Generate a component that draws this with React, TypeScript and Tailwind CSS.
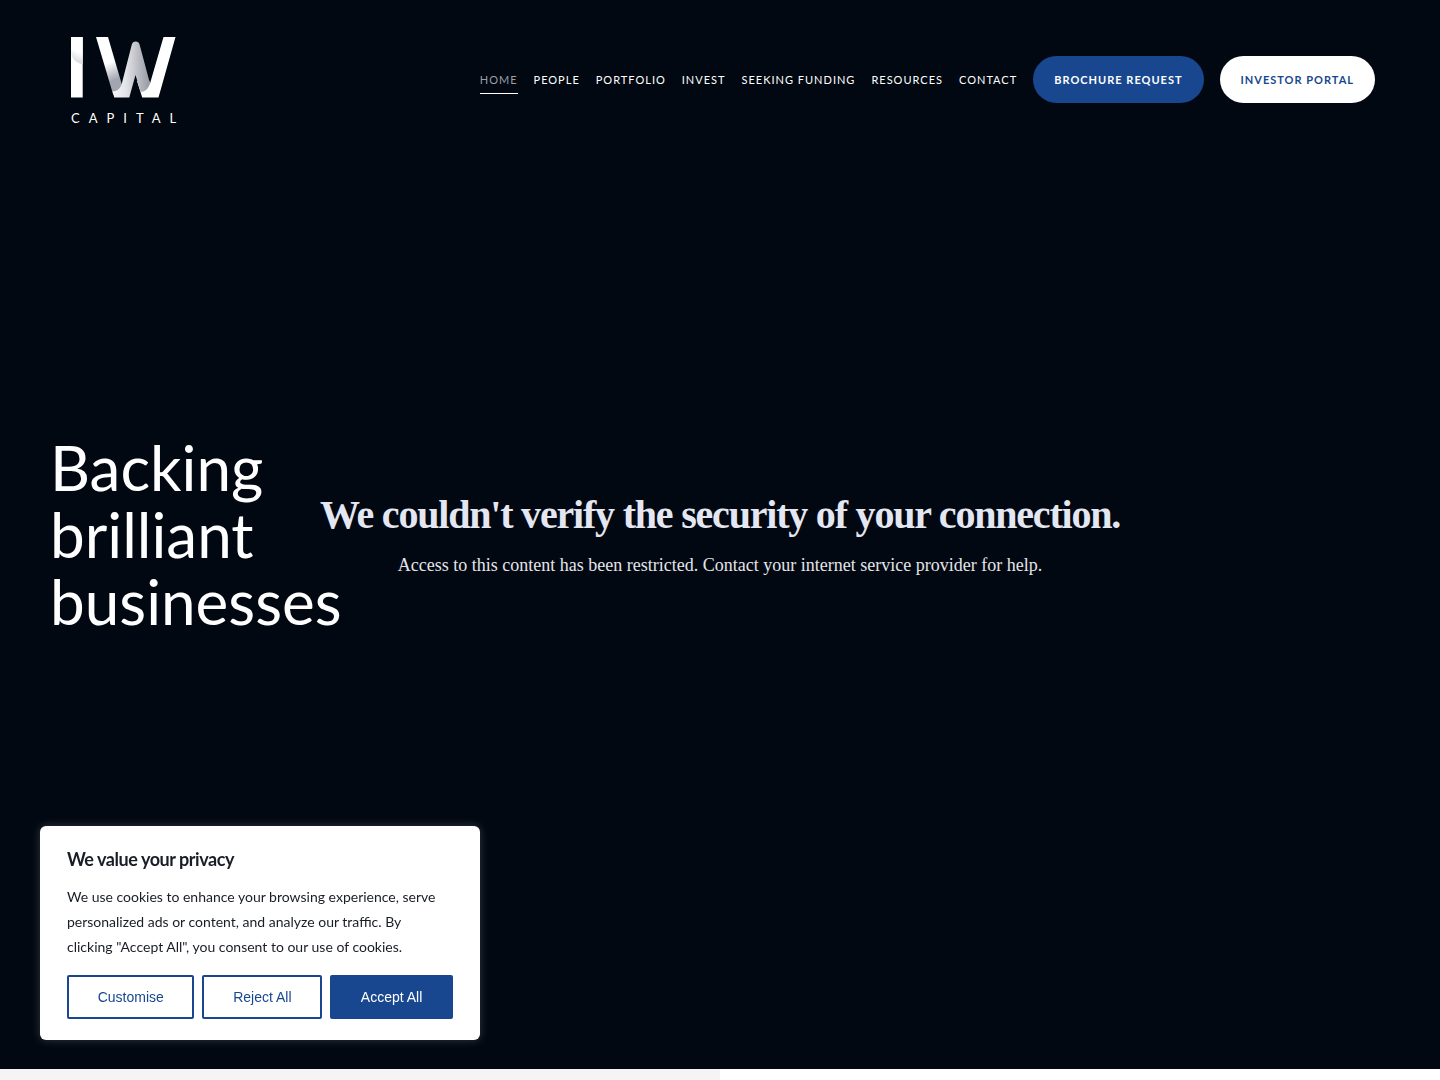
import React from 'react';

const navItems = [
  { label: 'Home', active: true },
  { label: 'People' },
  { label: 'Portfolio' },
  { label: 'Invest' },
  { label: 'Seeking Funding' },
  { label: 'Resources' },
  { label: 'Contact' },
];

const Logo = () => (
  <a href="#" aria-label="IW Capital" className="block w-[105px]">
    <svg viewBox="0 0 105 61" className="block w-full" aria-hidden="true">
      <defs>
        <linearGradient id="iShade" x1="0.2" y1="0" x2="0" y2="1">
          <stop offset="0.45" stopColor="#ffffff" />
          <stop offset="1" stopColor="#c6c9d3" />
        </linearGradient>
        <linearGradient id="leftShade" x1="0" y1="0" x2="0.2" y2="1">
          <stop offset="0.52" stopColor="#ffffff" />
          <stop offset="0.85" stopColor="#a2a5b0" />
        </linearGradient>
        <linearGradient id="midShade" x1="0" y1="0" x2="1" y2="0">
          <stop offset="0" stopColor="#f8f8fa" />
          <stop offset="0.35" stopColor="#e4e5e9" />
          <stop offset="0.65" stopColor="#bfc1c7" />
          <stop offset="1" stopColor="#9699a3" />
        </linearGradient>
      </defs>
      <path d="M0 0h11.7v60.5H0z" fill="#fff" />
      <path d="M0 0h11.7v27C6 26.500 1.500 22.500 0 16z" fill="url(#iShade)" />
      <path d="M25 0h12l14.600 50-2.600 7-6.700 1z" fill="url(#leftShade)" />
      <path d="M92.500 0H104.500L87.500 60.500H71.200L66 44l12-1 1 3.500z" fill="#fff" />
      <path
        d="M60.700 8c.8-4.600 7.200-4.600 8 0L79 46.500c-1.500 5-4.500 8-9.300 8.500L64.500 38l-6.200 22.500H43.300l-1.800-6.200c4.700.2 7.800-2.800 9.200-7.300z"
        fill="url(#midShade)"
      />
    </svg>
    <span className="mt-[15px] block whitespace-nowrap text-[13px] leading-[10px] tracking-[9px]">CAPITAL</span>
  </a>
);

const Header = () => (
  <header className="flex h-[159px] items-center justify-between pl-[71px] pr-[65px]">
    <Logo />
    <nav className="flex items-center gap-4 whitespace-nowrap text-[11px] uppercase leading-[18px] tracking-[1px]">
      {navItems.map((item) => (
        <a
          key={item.label}
          href="#"
          className={`border-b pb-1 pt-[6px] ${item.active ? 'border-white text-[#9b9ea6]' : 'border-transparent'}`}
        >
          {item.label}
        </a>
      ))}
      <a href="#" className="flex h-[47px] items-center rounded-full bg-[#18478f] px-[21px] font-bold">
        Brochure Request
      </a>
      <a href="#" className="flex h-[47px] items-center rounded-full bg-white px-[21px] font-bold text-[#18478f]">
        Investor Portal
      </a>
    </nav>
  </header>
);

const ConnectionNotice = () => (
  <div className="absolute inset-0 flex flex-col items-center justify-center gap-[14px] pb-[159px] text-center font-['Liberation_Serif',serif]">
    <h2 className="text-[40px] font-bold leading-[46px] tracking-[-0.03em] text-[#e4e7f2]">
      We couldn't verify the security of your connection.
    </h2>
    <p className="text-lg leading-[26px] text-[#e4e5e9]">
      Access to this content has been restricted. Contact your internet service provider for help.
    </p>
  </div>
);

const CookieBanner = () => (
  <section
    aria-labelledby="cookie-title"
    className="fixed bottom-10 left-10 w-[440px] rounded-md bg-white px-[27px] py-[21px] text-[#191d26] shadow-[0_0_10px_rgba(172,171,171,0.3)]"
  >
    <h2 id="cookie-title" className="text-lg font-bold leading-6 tracking-tight">
      We value your privacy
    </h2>
    <p className="mt-[13px] pr-3 text-sm leading-[25px]">
      We use cookies to enhance your browsing experience, serve personalized ads or content, and analyze our traffic. By
      clicking "Accept All", you consent to our use of cookies.
    </p>
    <div className="mt-4 flex gap-2 whitespace-nowrap font-['Liberation_Sans',sans-serif] text-sm text-[#18478f]">
      <button className="h-11 grow rounded-xs border-2 border-[#18478f] px-[27px]">Customise</button>
      <button className="h-11 grow rounded-xs border-2 border-[#18478f] px-[27px]">Reject All</button>
      <button className="h-11 grow rounded-xs border-2 border-[#18478f] bg-[#18478f] px-[27px] text-white">
        Accept All
      </button>
    </div>
  </section>
);

export default function App() {
  return (
    <div className="flex min-h-screen flex-col overflow-x-hidden font-['Lato',sans-serif]">
      <div className="flex grow flex-col bg-[#010811] text-white">
        <Header />
        <main className="relative flex grow items-center pb-[159px] pl-[50px]">
          <h1 className="w-[300px] text-[62px] leading-[67px]">Backing brilliant businesses</h1>
          <ConnectionNotice />
        </main>
      </div>
      <div className="grid h-[11px] grid-cols-2">
        <div className="bg-[#f4f4f4]" />
        <div className="bg-white" />
      </div>
      <CookieBanner />
    </div>
  );
}
